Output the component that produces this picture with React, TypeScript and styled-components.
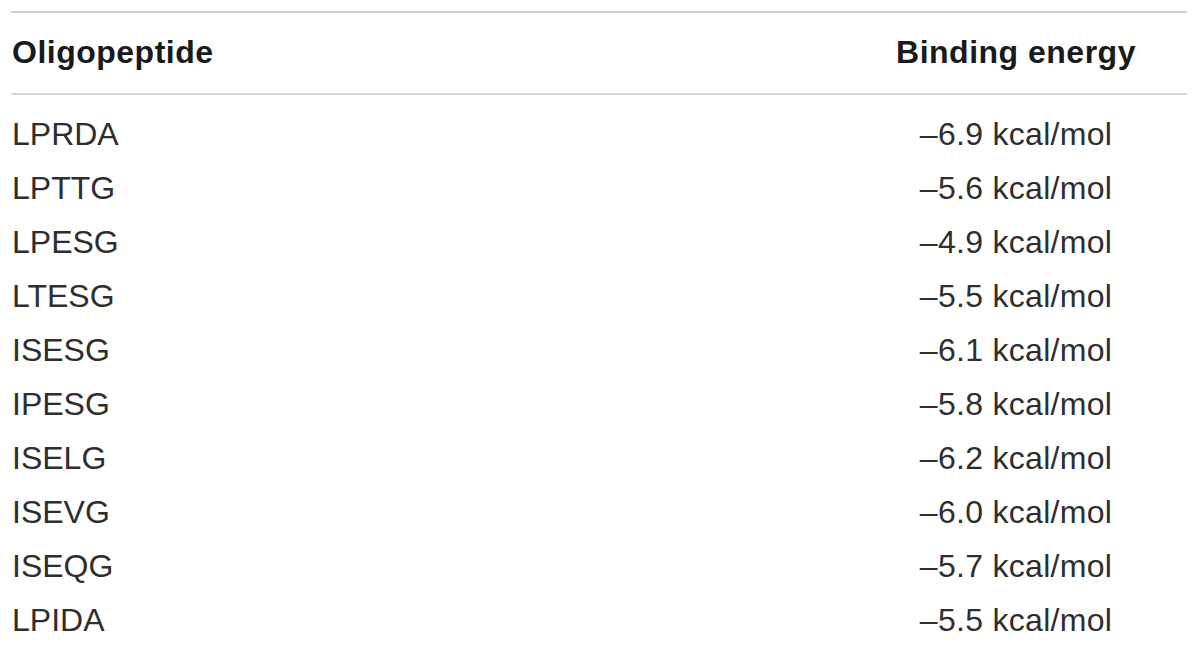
import React from "react";
import styled, { createGlobalStyle } from "styled-components";

const Global = createGlobalStyle`
  html, body { margin: 0; padding: 0; background: #ffffff; }
  body { font-family: "Liberation Sans", Arial, sans-serif; }
`;

const Page = styled.div`
  padding: 11px 13px 0 11px;
  width: 1176px;
`;

const Table = styled.div`
  border-top: 2px solid #cfcfcf;
`;

const Row = styled.div<{ $head?: boolean }>`
  display: grid;
  grid-template-columns: 1fr 342px;
  height: 54px;
  line-height: 54px;
  font-size: 32px;
  color: ${(p) => (p.$head ? "#1a1a1a" : "#2e2e2e")};
  font-weight: ${(p) => (p.$head ? 700 : 400)};
  letter-spacing: ${(p) => (p.$head ? "0.5px" : "0")};
`;

const Head = styled.div`
  padding: 12px 0 14px;
  border-bottom: 2px solid #d6d6d6;
`;

const Body = styled.div`
  padding-top: 12px;
`;

const Left = styled.div`
  padding-left: 1px;
  white-space: nowrap;
`;

const Right = styled.div`
  text-align: center;
  white-space: nowrap;
`;

const Value = styled.span`
  letter-spacing: 0.3px;
`;

const rows: [string, string][] = [
  ["LPRDA", "6.9"],
  ["LPTTG", "5.6"],
  ["LPESG", "4.9"],
  ["LTESG", "5.5"],
  ["ISESG", "6.1"],
  ["IPESG", "5.8"],
  ["ISELG", "6.2"],
  ["ISEVG", "6.0"],
  ["ISEQG", "5.7"],
  ["LPIDA", "5.5"],
];

export default function App() {
  return (
    <>
      <Global />
      <Page>
        <Table>
          <Head>
            <Row $head>
              <Left>Oligopeptide</Left>
              <Right>Binding energy</Right>
            </Row>
          </Head>
          <Body>
            {rows.map(([name, val]) => (
              <Row key={name}>
                <Left>{name}</Left>
                <Right>
                  <Value>{"\u2013" + val + " kcal/mol"}</Value>
                </Right>
              </Row>
            ))}
          </Body>
        </Table>
      </Page>
    </>
  );
}
